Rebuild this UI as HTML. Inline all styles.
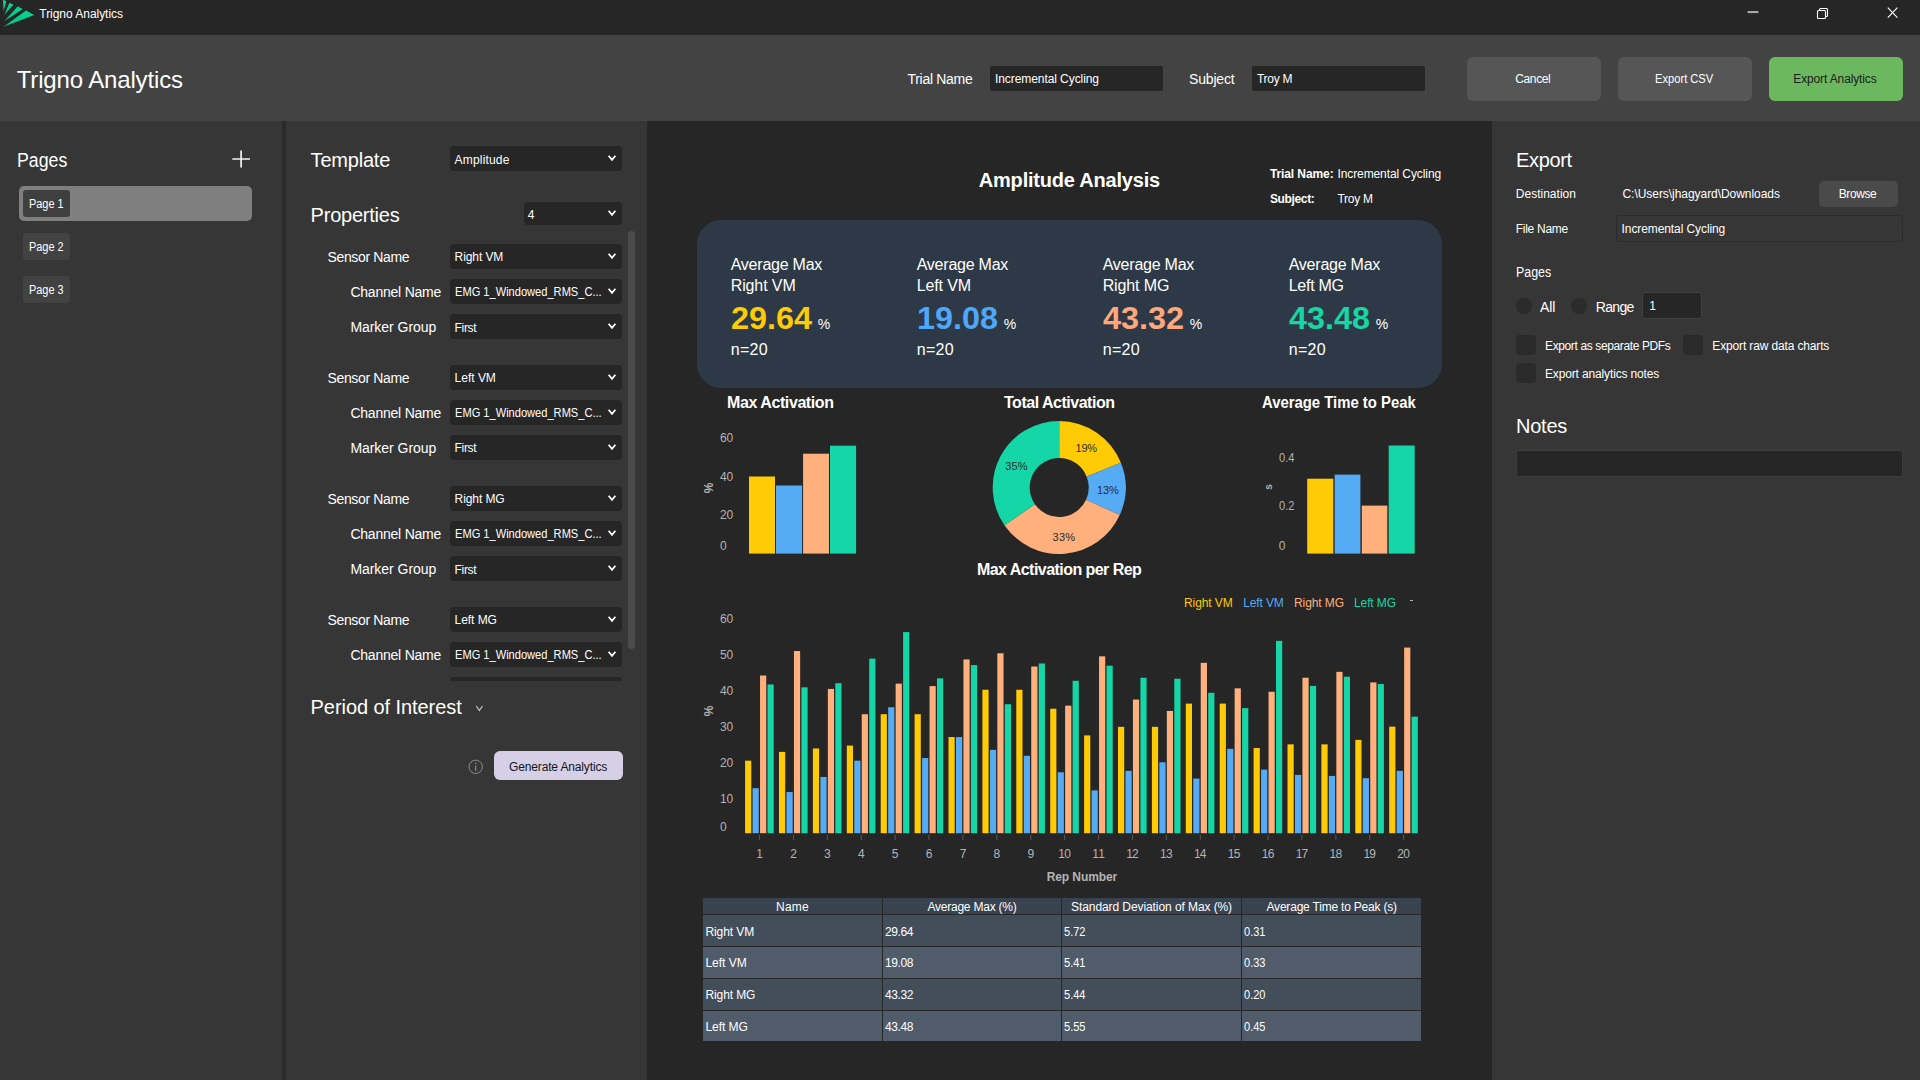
<!DOCTYPE html>
<html lang="en"><head><meta charset="utf-8"><title>Trigno Analytics</title>
<style>
html,body{margin:0;padding:0;background:#363636;}
body{width:1920px;height:1080px;position:relative;overflow:hidden;font-family:"Liberation Sans",sans-serif;}
.b{position:absolute;display:block;}
.t{position:absolute;display:block;white-space:pre;}
</style></head><body>
<div class="b" style="left:0.00px;top:0.00px;width:1920.00px;height:35.00px;background:#262626;"></div>
<div class="b" style="left:0.00px;top:35.00px;width:1920.00px;height:86.00px;background:#434343;"></div>
<div class="b" style="left:0.00px;top:121.00px;width:1920.00px;height:959.00px;background:#363636;"></div>
<div class="b" style="left:282.00px;top:121.00px;width:4.00px;height:959.00px;background:#2b2b2b;"></div>
<div class="b" style="left:647.00px;top:121.00px;width:845.00px;height:959.00px;background:#262626;"></div>
<svg class="b" style="left:0;top:0" width="40" height="35" viewBox="0 0 40 35">
<defs><linearGradient id="lg" x1="0" y1="1" x2="1" y2="0"><stop offset="0" stop-color="#079a6b"/><stop offset="0.3" stop-color="#06c888"/><stop offset="1" stop-color="#05d792"/></linearGradient></defs><g fill="url(#lg)">
<polygon points="3,26.9 26,10.6 34.2,14.9"/>
<polygon points="3.9,21.5 17.6,6.6 22.8,8.9"/>
<polygon points="4.1,15 9.5,2.8 13.5,4.8"/>
<polygon points="3.5,11.2 2.9,-1 6.3,1.6"/>
</g></svg>
<span class="t" style="left:39.30px;top:8px;font-size:12px;line-height:12px;color:#ffffff;letter-spacing:-0.037px;">Trigno Analytics</span>
<svg class="b" style="left:1730px;top:0" width="190" height="35" viewBox="1730 0 190 35">
<rect x="1747.6" y="11" width="10.8" height="2.1" fill="#a8a8a8"/>
<g fill="none" stroke="#ffffff" stroke-width="1.1">
<rect x="1819.5" y="8.5" width="8" height="8" rx="1"/>
<rect x="1817.5" y="10.5" width="8" height="8" rx="1" fill="#262626"/>
<path d="M1887.8 7.6 L1897.4 17.6 M1897.4 7.6 L1887.8 17.6"/>
</g></svg>
<span class="t" style="left:16.70px;top:68px;font-size:24px;line-height:24px;color:#ffffff;letter-spacing:-0.147px;">Trigno Analytics</span>
<span class="t" style="left:907.50px;top:72px;font-size:14px;line-height:14px;color:#ffffff;letter-spacing:-0.300px;">Trial Name</span>
<div class="b" style="left:990.00px;top:66.20px;width:173.00px;height:24.50px;background:#262626;border-radius:2px;"></div>
<span class="t" style="left:995.00px;top:73px;font-size:12px;line-height:12px;color:#ffffff;letter-spacing:-0.076px;">Incremental Cycling</span>
<span class="t" style="left:1189.00px;top:72px;font-size:14px;line-height:14px;color:#ffffff;letter-spacing:-0.175px;">Subject</span>
<div class="b" style="left:1252.00px;top:66.20px;width:173.00px;height:24.50px;background:#262626;border-radius:2px;"></div>
<span class="t" style="left:1257.00px;top:73px;font-size:12px;line-height:12px;color:#ffffff;letter-spacing:-0.275px;">Troy M</span>
<div class="b" style="left:1466.50px;top:56.50px;width:134.00px;height:44.00px;background:#565656;border-radius:6px;"></div>
<span class="t" style="left:1515.30px;top:73px;font-size:12px;line-height:12px;color:#ffffff;letter-spacing:-0.395px;">Cancel</span>
<div class="b" style="left:1617.50px;top:56.50px;width:134.00px;height:44.00px;background:#565656;border-radius:6px;"></div>
<span class="t" style="left:1655.00px;top:73px;font-size:12px;line-height:12px;color:#ffffff;transform:scaleX(0.9291);transform-origin:0 0;">Export CSV</span>
<div class="b" style="left:1768.50px;top:56.50px;width:134.00px;height:44.00px;background:#6cb85f;border-radius:6px;"></div>
<span class="t" style="left:1793.30px;top:73px;font-size:12px;line-height:12px;color:#1c1c1c;letter-spacing:-0.132px;">Export Analytics</span>
<span class="t" style="left:17.20px;top:150px;font-size:20px;line-height:20px;color:#ffffff;transform:scaleX(0.8863);transform-origin:0 0;">Pages</span>
<svg class="b" style="left:230px;top:148px" width="24" height="24" viewBox="230 148 24 24"><path d="M232.3 159H250M241.1 150.5V167.5" stroke="#f2f2f2" stroke-width="1.7" fill="none"/></svg>
<div class="b" style="left:18.80px;top:186.20px;width:233.20px;height:34.60px;background:#7f7f7f;border-radius:5px;"></div>
<div class="b" style="left:23.00px;top:190.00px;width:47.00px;height:27.00px;background:#3f3f3f;border-radius:3px;"></div>
<span class="t" style="left:28.70px;top:198px;font-size:12px;line-height:12px;color:#ffffff;transform:scaleX(0.9105);transform-origin:0 0;">Page 1</span>
<div class="b" style="left:23.00px;top:233.00px;width:47.00px;height:27.00px;background:#424242;border-radius:3px;"></div>
<span class="t" style="left:28.70px;top:241px;font-size:12px;line-height:12px;color:#ffffff;transform:scaleX(0.9105);transform-origin:0 0;">Page 2</span>
<div class="b" style="left:23.00px;top:276.00px;width:47.00px;height:27.00px;background:#424242;border-radius:3px;"></div>
<span class="t" style="left:28.70px;top:284px;font-size:12px;line-height:12px;color:#ffffff;transform:scaleX(0.9105);transform-origin:0 0;">Page 3</span>
<span class="t" style="left:310.60px;top:150px;font-size:20px;line-height:20px;color:#ffffff;letter-spacing:-0.204px;">Template</span>
<div class="b" style="left:450.00px;top:146.30px;width:172.00px;height:24.60px;background:#262626;border-radius:4px;"></div>
<span class="t" style="left:454.60px;top:154px;font-size:12px;line-height:12px;color:#ffffff;letter-spacing:0.178px;">Amplitude</span>
<svg class="b" style="left:606.40px;top:153.30px" width="12" height="10" viewBox="0 0 12 10"><path d="M2.6 2.7L6 6.8L9.4 2.7" stroke="#ffffff" stroke-width="1.7" fill="none"/></svg>
<span class="t" style="left:310.60px;top:205px;font-size:20px;line-height:20px;color:#ffffff;letter-spacing:-0.225px;">Properties</span>
<div class="b" style="left:524.00px;top:202.20px;width:98.00px;height:22.50px;background:#262626;border-radius:4px;"></div>
<span class="t" style="left:527.80px;top:209px;font-size:12px;line-height:12px;color:#ffffff;">4</span>
<svg class="b" style="left:606.40px;top:208.15px" width="12" height="10" viewBox="0 0 12 10"><path d="M2.6 2.7L6 6.8L9.4 2.7" stroke="#ffffff" stroke-width="1.7" fill="none"/></svg>
<div class="b" style="left:286px;top:232px;width:361px;height:449px;overflow:hidden">
<span class="t" style="left:41.50px;top:18px;font-size:14px;line-height:14px;color:#ffffff;letter-spacing:-0.353px;">Sensor Name</span>
<div class="b" style="left:164.00px;top:12.00px;width:172.00px;height:24.75px;background:#262626;border-radius:4px;"></div>
<span class="t" style="left:168.60px;top:19px;font-size:12px;line-height:12px;color:#ffffff;letter-spacing:-0.082px;">Right VM</span>
<svg class="b" style="left:320.40px;top:19.07px" width="12" height="10" viewBox="0 0 12 10"><path d="M2.6 2.7L6 6.8L9.4 2.7" stroke="#ffffff" stroke-width="1.7" fill="none"/></svg>
<span class="t" style="left:64.40px;top:53px;font-size:14px;line-height:14px;color:#ffffff;letter-spacing:-0.225px;">Channel Name</span>
<div class="b" style="left:164.00px;top:47.00px;width:172.00px;height:24.75px;background:#262626;border-radius:4px;"></div>
<span class="t" style="left:168.60px;top:54px;font-size:12px;line-height:12px;color:#ffffff;transform:scaleX(0.9241);transform-origin:0 0;">EMG 1_Windowed_RMS_C...</span>
<svg class="b" style="left:320.40px;top:54.08px" width="12" height="10" viewBox="0 0 12 10"><path d="M2.6 2.7L6 6.8L9.4 2.7" stroke="#ffffff" stroke-width="1.7" fill="none"/></svg>
<span class="t" style="left:64.40px;top:88px;font-size:14px;line-height:14px;color:#ffffff;letter-spacing:-0.043px;">Marker Group</span>
<div class="b" style="left:164.00px;top:82.20px;width:172.00px;height:24.75px;background:#262626;border-radius:4px;"></div>
<span class="t" style="left:168.60px;top:90px;font-size:12px;line-height:12px;color:#ffffff;letter-spacing:-0.344px;">First</span>
<svg class="b" style="left:320.40px;top:89.28px" width="12" height="10" viewBox="0 0 12 10"><path d="M2.6 2.7L6 6.8L9.4 2.7" stroke="#ffffff" stroke-width="1.7" fill="none"/></svg>
<span class="t" style="left:41.50px;top:139px;font-size:14px;line-height:14px;color:#ffffff;letter-spacing:-0.353px;">Sensor Name</span>
<div class="b" style="left:164.00px;top:133.00px;width:172.00px;height:24.75px;background:#262626;border-radius:4px;"></div>
<span class="t" style="left:168.60px;top:140px;font-size:12px;line-height:12px;color:#ffffff;letter-spacing:-0.013px;">Left VM</span>
<svg class="b" style="left:320.40px;top:140.07px" width="12" height="10" viewBox="0 0 12 10"><path d="M2.6 2.7L6 6.8L9.4 2.7" stroke="#ffffff" stroke-width="1.7" fill="none"/></svg>
<span class="t" style="left:64.40px;top:174px;font-size:14px;line-height:14px;color:#ffffff;letter-spacing:-0.225px;">Channel Name</span>
<div class="b" style="left:164.00px;top:168.00px;width:172.00px;height:24.75px;background:#262626;border-radius:4px;"></div>
<span class="t" style="left:168.60px;top:175px;font-size:12px;line-height:12px;color:#ffffff;transform:scaleX(0.9241);transform-origin:0 0;">EMG 1_Windowed_RMS_C...</span>
<svg class="b" style="left:320.40px;top:175.07px" width="12" height="10" viewBox="0 0 12 10"><path d="M2.6 2.7L6 6.8L9.4 2.7" stroke="#ffffff" stroke-width="1.7" fill="none"/></svg>
<span class="t" style="left:64.40px;top:209px;font-size:14px;line-height:14px;color:#ffffff;letter-spacing:-0.043px;">Marker Group</span>
<div class="b" style="left:164.00px;top:203.20px;width:172.00px;height:24.75px;background:#262626;border-radius:4px;"></div>
<span class="t" style="left:168.60px;top:210px;font-size:12px;line-height:12px;color:#ffffff;letter-spacing:-0.344px;">First</span>
<svg class="b" style="left:320.40px;top:210.27px" width="12" height="10" viewBox="0 0 12 10"><path d="M2.6 2.7L6 6.8L9.4 2.7" stroke="#ffffff" stroke-width="1.7" fill="none"/></svg>
<span class="t" style="left:41.50px;top:260px;font-size:14px;line-height:14px;color:#ffffff;letter-spacing:-0.353px;">Sensor Name</span>
<div class="b" style="left:164.00px;top:254.00px;width:172.00px;height:24.75px;background:#262626;border-radius:4px;"></div>
<span class="t" style="left:168.60px;top:261px;font-size:12px;line-height:12px;color:#ffffff;letter-spacing:-0.089px;">Right MG</span>
<svg class="b" style="left:320.40px;top:261.07px" width="12" height="10" viewBox="0 0 12 10"><path d="M2.6 2.7L6 6.8L9.4 2.7" stroke="#ffffff" stroke-width="1.7" fill="none"/></svg>
<span class="t" style="left:64.40px;top:295px;font-size:14px;line-height:14px;color:#ffffff;letter-spacing:-0.225px;">Channel Name</span>
<div class="b" style="left:164.00px;top:289.00px;width:172.00px;height:24.75px;background:#262626;border-radius:4px;"></div>
<span class="t" style="left:168.60px;top:296px;font-size:12px;line-height:12px;color:#ffffff;transform:scaleX(0.9241);transform-origin:0 0;">EMG 1_Windowed_RMS_C...</span>
<svg class="b" style="left:320.40px;top:296.07px" width="12" height="10" viewBox="0 0 12 10"><path d="M2.6 2.7L6 6.8L9.4 2.7" stroke="#ffffff" stroke-width="1.7" fill="none"/></svg>
<span class="t" style="left:64.40px;top:330px;font-size:14px;line-height:14px;color:#ffffff;letter-spacing:-0.043px;">Marker Group</span>
<div class="b" style="left:164.00px;top:324.20px;width:172.00px;height:24.75px;background:#262626;border-radius:4px;"></div>
<span class="t" style="left:168.60px;top:332px;font-size:12px;line-height:12px;color:#ffffff;letter-spacing:-0.344px;">First</span>
<svg class="b" style="left:320.40px;top:331.27px" width="12" height="10" viewBox="0 0 12 10"><path d="M2.6 2.7L6 6.8L9.4 2.7" stroke="#ffffff" stroke-width="1.7" fill="none"/></svg>
<span class="t" style="left:41.50px;top:381px;font-size:14px;line-height:14px;color:#ffffff;letter-spacing:-0.353px;">Sensor Name</span>
<div class="b" style="left:164.00px;top:375.00px;width:172.00px;height:24.75px;background:#262626;border-radius:4px;"></div>
<span class="t" style="left:168.60px;top:382px;font-size:12px;line-height:12px;color:#ffffff;letter-spacing:-0.054px;">Left MG</span>
<svg class="b" style="left:320.40px;top:382.07px" width="12" height="10" viewBox="0 0 12 10"><path d="M2.6 2.7L6 6.8L9.4 2.7" stroke="#ffffff" stroke-width="1.7" fill="none"/></svg>
<span class="t" style="left:64.40px;top:416px;font-size:14px;line-height:14px;color:#ffffff;letter-spacing:-0.225px;">Channel Name</span>
<div class="b" style="left:164.00px;top:410.00px;width:172.00px;height:24.75px;background:#262626;border-radius:4px;"></div>
<span class="t" style="left:168.60px;top:417px;font-size:12px;line-height:12px;color:#ffffff;transform:scaleX(0.9241);transform-origin:0 0;">EMG 1_Windowed_RMS_C...</span>
<svg class="b" style="left:320.40px;top:417.07px" width="12" height="10" viewBox="0 0 12 10"><path d="M2.6 2.7L6 6.8L9.4 2.7" stroke="#ffffff" stroke-width="1.7" fill="none"/></svg>
<span class="t" style="left:64.40px;top:451px;font-size:14px;line-height:14px;color:#ffffff;letter-spacing:-0.043px;">Marker Group</span>
<div class="b" style="left:164.00px;top:445.20px;width:172.00px;height:24.75px;background:#262626;border-radius:4px;"></div>
<span class="t" style="left:168.60px;top:452px;font-size:12px;line-height:12px;color:#ffffff;letter-spacing:-0.344px;">First</span>
<svg class="b" style="left:320.40px;top:452.27px" width="12" height="10" viewBox="0 0 12 10"><path d="M2.6 2.7L6 6.8L9.4 2.7" stroke="#ffffff" stroke-width="1.7" fill="none"/></svg>
</div>
<div class="b" style="left:628.00px;top:231.00px;width:6.60px;height:417.60px;background:#4b4b4b;border-radius:3.3px;"></div>
<span class="t" style="left:310.60px;top:697px;font-size:20px;line-height:20px;color:#ffffff;letter-spacing:-0.068px;">Period of Interest</span>
<svg class="b" style="left:474px;top:703px" width="12" height="10" viewBox="474 703 12 10"><path d="M476.3 706L479.4 710.6L482.5 706" stroke="#cfcfcf" stroke-width="1.1" fill="none"/></svg>
<svg class="b" style="left:466px;top:757px" width="20" height="20" viewBox="466 757 20 20"><circle cx="475.7" cy="766.8" r="6.7" stroke="#8d8d8d" stroke-width="1" fill="none"/><path d="M475.7 765.6V771" stroke="#8d8d8d" stroke-width="1.2"/><circle cx="475.7" cy="763.3" r="0.8" fill="#8d8d8d"/></svg>
<div class="b" style="left:493.70px;top:751.40px;width:129.00px;height:29.00px;background:#d5d0e5;border-radius:6px;"></div>
<span class="t" style="left:509.00px;top:761px;font-size:12px;line-height:12px;color:#15151f;letter-spacing:-0.144px;">Generate Analytics</span>
<span class="t" style="left:1516.00px;top:150px;font-size:20px;line-height:20px;color:#ffffff;letter-spacing:-0.350px;">Export</span>
<span class="t" style="left:1515.80px;top:188px;font-size:12px;line-height:12px;color:#ffffff;letter-spacing:0.010px;">Destination</span>
<span class="t" style="left:1622.50px;top:188px;font-size:12px;line-height:12px;color:#ffffff;letter-spacing:-0.048px;">C:\Users\jhagyard\Downloads</span>
<div class="b" style="left:1818.60px;top:180.50px;width:79.00px;height:26.00px;background:#4a4a4a;border-radius:5px;"></div>
<span class="t" style="left:1838.70px;top:188px;font-size:12px;line-height:12px;color:#ffffff;letter-spacing:-0.400px;">Browse</span>
<span class="t" style="left:1515.80px;top:223px;font-size:12px;line-height:12px;color:#ffffff;letter-spacing:-0.291px;">File Name</span>
<div class="b" style="left:1616.00px;top:215.00px;width:287.00px;height:27.00px;background:#363636;border-radius:3px;box-sizing:border-box;border:1px solid #2c2c2c;"></div>
<span class="t" style="left:1621.60px;top:223px;font-size:12px;line-height:12px;color:#ffffff;letter-spacing:-0.093px;">Incremental Cycling</span>
<span class="t" style="left:1516.00px;top:265px;font-size:14px;line-height:14px;color:#ffffff;transform:scaleX(0.8881);transform-origin:0 0;">Pages</span>
<div class="b" style="left:1516.30px;top:298.20px;width:15.60px;height:15.60px;background:#2b2b2b;border-radius:8px;"></div>
<span class="t" style="left:1540.00px;top:300px;font-size:14px;line-height:14px;color:#ffffff;letter-spacing:-0.100px;">All</span>
<div class="b" style="left:1571.00px;top:298.20px;width:15.60px;height:15.60px;background:#2b2b2b;border-radius:8px;"></div>
<span class="t" style="left:1595.70px;top:300px;font-size:14px;line-height:14px;color:#ffffff;letter-spacing:-0.662px;">Range</span>
<div class="b" style="left:1642.00px;top:292.00px;width:60.00px;height:27.00px;background:#262626;border-radius:3px;box-sizing:border-box;border:1px solid #404040;"></div>
<span class="t" style="left:1649.30px;top:300px;font-size:12px;line-height:12px;color:#ffffff;">1</span>
<div class="b" style="left:1516.00px;top:335.00px;width:20.00px;height:20.00px;background:#2a2a2a;border-radius:4px;"></div>
<span class="t" style="left:1545.00px;top:340px;font-size:12px;line-height:12px;color:#ffffff;letter-spacing:-0.377px;">Export as separate PDFs</span>
<div class="b" style="left:1683.30px;top:335.00px;width:20.00px;height:20.00px;background:#2a2a2a;border-radius:4px;"></div>
<span class="t" style="left:1712.30px;top:340px;font-size:12px;line-height:12px;color:#ffffff;letter-spacing:-0.143px;">Export raw data charts</span>
<div class="b" style="left:1516.00px;top:362.70px;width:20.00px;height:20.00px;background:#2a2a2a;border-radius:4px;"></div>
<span class="t" style="left:1545.00px;top:368px;font-size:12px;line-height:12px;color:#ffffff;letter-spacing:-0.146px;">Export analytics notes</span>
<span class="t" style="left:1516.00px;top:416px;font-size:20px;line-height:20px;color:#ffffff;letter-spacing:-0.238px;">Notes</span>
<div class="b" style="left:1516.00px;top:450.00px;width:386.70px;height:26.70px;background:#262626;border-radius:2px;box-sizing:border-box;border:1px solid #3d3d3d;"></div>
<span class="t" style="left:978.80px;top:170px;font-size:20px;line-height:20px;color:#ffffff;letter-spacing:-0.204px;font-weight:bold;">Amplitude Analysis</span>
<span class="t" style="left:1269.90px;top:168px;font-size:12px;line-height:12px;color:#ffffff;letter-spacing:-0.095px;font-weight:bold;">Trial Name:</span>
<span class="t" style="left:1337.40px;top:168px;font-size:12px;line-height:12px;color:#ffffff;letter-spacing:-0.088px;">Incremental Cycling</span>
<span class="t" style="left:1269.90px;top:193px;font-size:12px;line-height:12px;color:#ffffff;letter-spacing:-0.339px;font-weight:bold;">Subject:</span>
<span class="t" style="left:1337.40px;top:193px;font-size:12px;line-height:12px;color:#ffffff;letter-spacing:-0.235px;">Troy M</span>
<div class="b" style="left:697.20px;top:220.00px;width:744.80px;height:167.60px;background:#2e3947;border-radius:24px;"></div>
<span class="t" style="left:730.70px;top:257px;font-size:16px;line-height:16px;color:#ffffff;letter-spacing:-0.230px;">Average Max</span>
<span class="t" style="left:730.70px;top:278px;font-size:16px;line-height:16px;color:#ffffff;letter-spacing:-0.107px;">Right VM</span>
<span class="t" style="left:730.70px;top:303px;font-size:31px;line-height:31px;color:#ffcb05;transform:scaleX(1.0435);transform-origin:0 0;font-weight:bold;">29.64</span>
<span class="t" style="left:817.70px;top:317px;font-size:14px;line-height:14px;color:#ffffff;">%</span>
<span class="t" style="left:730.70px;top:342px;font-size:16px;line-height:16px;color:#ffffff;letter-spacing:0.333px;">n=20</span>
<span class="t" style="left:916.70px;top:257px;font-size:16px;line-height:16px;color:#ffffff;letter-spacing:-0.230px;">Average Max</span>
<span class="t" style="left:916.70px;top:278px;font-size:16px;line-height:16px;color:#ffffff;letter-spacing:-0.138px;">Left VM</span>
<span class="t" style="left:916.70px;top:303px;font-size:31px;line-height:31px;color:#4ea7f8;transform:scaleX(1.0435);transform-origin:0 0;font-weight:bold;">19.08</span>
<span class="t" style="left:1003.70px;top:317px;font-size:14px;line-height:14px;color:#ffffff;">%</span>
<span class="t" style="left:916.70px;top:342px;font-size:16px;line-height:16px;color:#ffffff;letter-spacing:0.333px;">n=20</span>
<span class="t" style="left:1102.70px;top:257px;font-size:16px;line-height:16px;color:#ffffff;letter-spacing:-0.230px;">Average Max</span>
<span class="t" style="left:1102.70px;top:278px;font-size:16px;line-height:16px;color:#ffffff;letter-spacing:-0.132px;">Right MG</span>
<span class="t" style="left:1102.70px;top:303px;font-size:31px;line-height:31px;color:#ffa87b;transform:scaleX(1.0435);transform-origin:0 0;font-weight:bold;">43.32</span>
<span class="t" style="left:1189.70px;top:317px;font-size:14px;line-height:14px;color:#ffffff;">%</span>
<span class="t" style="left:1102.70px;top:342px;font-size:16px;line-height:16px;color:#ffffff;letter-spacing:0.333px;">n=20</span>
<span class="t" style="left:1288.70px;top:257px;font-size:16px;line-height:16px;color:#ffffff;letter-spacing:-0.230px;">Average Max</span>
<span class="t" style="left:1288.70px;top:278px;font-size:16px;line-height:16px;color:#ffffff;letter-spacing:-0.263px;">Left MG</span>
<span class="t" style="left:1288.70px;top:303px;font-size:31px;line-height:31px;color:#18d5a3;transform:scaleX(1.0435);transform-origin:0 0;font-weight:bold;">43.48</span>
<span class="t" style="left:1375.70px;top:317px;font-size:14px;line-height:14px;color:#ffffff;">%</span>
<span class="t" style="left:1288.70px;top:342px;font-size:16px;line-height:16px;color:#ffffff;letter-spacing:0.333px;">n=20</span>
<span class="t" style="left:727.00px;top:395px;font-size:16px;line-height:16px;color:#ffffff;letter-spacing:-0.413px;font-weight:bold;">Max Activation</span>
<span class="t" style="left:1004.00px;top:395px;font-size:16px;line-height:16px;color:#ffffff;letter-spacing:-0.483px;font-weight:bold;">Total Activation</span>
<span class="t" style="left:1262.00px;top:395px;font-size:16px;line-height:16px;color:#ffffff;transform:scaleX(0.9293);transform-origin:0 0;font-weight:bold;">Average Time to Peak</span>
<span class="t" style="left:977.00px;top:562px;font-size:16px;line-height:16px;color:#ffffff;letter-spacing:-0.551px;font-weight:bold;">Max Activation per Rep</span>
<svg class="b" style="left:647px;top:121px" width="845" height="959" viewBox="647 121 845 959" shape-rendering="auto"><rect x="749.00" y="476.50" width="26.00" height="77.10" fill="#ffcb05"/><rect x="776.00" y="485.50" width="26.10" height="68.10" fill="#56abf5"/><rect x="803.10" y="453.70" width="25.90" height="99.90" fill="#ffb07c"/><rect x="830.00" y="445.70" width="26.10" height="107.90" fill="#14d6a6"/><rect x="1307.20" y="478.70" width="26.10" height="74.90" fill="#ffcb05"/><rect x="1334.70" y="474.60" width="25.70" height="79.00" fill="#56abf5"/><rect x="1361.80" y="505.60" width="25.50" height="48.00" fill="#ffb07c"/><rect x="1388.70" y="445.50" width="26.00" height="108.10" fill="#14d6a6"/><path d="M1059.20 421.00A66.5 66.5 0 0 1 1120.88 462.63L1086.56 476.47A29.5 29.5 0 0 0 1059.20 458.00Z" fill="#ffcb05"/><path d="M1120.88 462.63A66.5 66.5 0 0 1 1119.72 515.06L1086.05 499.72A29.5 29.5 0 0 0 1086.56 476.47Z" fill="#56abf5"/><path d="M1119.72 515.06A66.5 66.5 0 0 1 1004.44 525.22L1034.91 504.23A29.5 29.5 0 0 0 1086.05 499.72Z" fill="#ffb07c"/><path d="M1004.44 525.22A66.5 66.5 0 0 1 1059.20 421.00L1059.20 458.00A29.5 29.5 0 0 0 1034.91 504.23Z" fill="#14d6a6"/><rect x="745.10" y="760.66" width="6.20" height="72.54" fill="#ffcb05"/><rect x="752.57" y="788.17" width="6.20" height="45.03" fill="#56abf5"/><rect x="760.04" y="675.49" width="6.20" height="157.71" fill="#ffb07c"/><rect x="767.51" y="684.46" width="6.20" height="148.74" fill="#14d6a6"/><rect x="759.05" y="835" width="1" height="5" fill="#5a5a5a"/><rect x="779.00" y="751.90" width="6.20" height="81.30" fill="#ffcb05"/><rect x="786.47" y="792.04" width="6.20" height="41.16" fill="#56abf5"/><rect x="793.94" y="651.04" width="6.20" height="182.16" fill="#ffb07c"/><rect x="801.41" y="687.31" width="6.20" height="145.89" fill="#14d6a6"/><rect x="792.95" y="835" width="1" height="5" fill="#5a5a5a"/><rect x="812.90" y="748.44" width="6.20" height="84.76" fill="#ffcb05"/><rect x="820.37" y="776.96" width="6.20" height="56.24" fill="#56abf5"/><rect x="827.84" y="688.94" width="6.20" height="144.26" fill="#ffb07c"/><rect x="835.31" y="683.24" width="6.20" height="149.96" fill="#14d6a6"/><rect x="826.85" y="835" width="1" height="5" fill="#5a5a5a"/><rect x="846.80" y="745.58" width="6.20" height="87.62" fill="#ffcb05"/><rect x="854.27" y="760.66" width="6.20" height="72.54" fill="#56abf5"/><rect x="861.74" y="714.21" width="6.20" height="118.99" fill="#ffb07c"/><rect x="869.21" y="658.58" width="6.20" height="174.62" fill="#14d6a6"/><rect x="860.75" y="835" width="1" height="5" fill="#5a5a5a"/><rect x="880.70" y="714.21" width="6.20" height="118.99" fill="#ffcb05"/><rect x="888.17" y="707.28" width="6.20" height="125.92" fill="#56abf5"/><rect x="895.64" y="683.64" width="6.20" height="149.56" fill="#ffb07c"/><rect x="903.11" y="632.10" width="6.20" height="201.10" fill="#14d6a6"/><rect x="894.65" y="835" width="1" height="5" fill="#5a5a5a"/><rect x="914.60" y="714.21" width="6.20" height="118.99" fill="#ffcb05"/><rect x="922.07" y="758.01" width="6.20" height="75.19" fill="#56abf5"/><rect x="929.54" y="686.09" width="6.20" height="147.11" fill="#ffb07c"/><rect x="937.01" y="678.35" width="6.20" height="154.85" fill="#14d6a6"/><rect x="928.55" y="835" width="1" height="5" fill="#5a5a5a"/><rect x="948.50" y="737.03" width="6.20" height="96.17" fill="#ffcb05"/><rect x="955.97" y="737.03" width="6.20" height="96.17" fill="#56abf5"/><rect x="963.44" y="659.40" width="6.20" height="173.80" fill="#ffb07c"/><rect x="970.91" y="665.10" width="6.20" height="168.10" fill="#14d6a6"/><rect x="962.45" y="835" width="1" height="5" fill="#5a5a5a"/><rect x="982.40" y="689.76" width="6.20" height="143.44" fill="#ffcb05"/><rect x="989.87" y="749.86" width="6.20" height="83.34" fill="#56abf5"/><rect x="997.34" y="653.29" width="6.20" height="179.91" fill="#ffb07c"/><rect x="1004.81" y="704.22" width="6.20" height="128.98" fill="#14d6a6"/><rect x="996.35" y="835" width="1" height="5" fill="#5a5a5a"/><rect x="1016.30" y="689.76" width="6.20" height="143.44" fill="#ffcb05"/><rect x="1023.77" y="755.77" width="6.20" height="77.43" fill="#56abf5"/><rect x="1031.24" y="666.53" width="6.20" height="166.67" fill="#ffb07c"/><rect x="1038.71" y="663.47" width="6.20" height="169.73" fill="#14d6a6"/><rect x="1030.25" y="835" width="1" height="5" fill="#5a5a5a"/><rect x="1050.20" y="708.71" width="6.20" height="124.49" fill="#ffcb05"/><rect x="1057.67" y="772.28" width="6.20" height="60.92" fill="#56abf5"/><rect x="1065.14" y="705.65" width="6.20" height="127.55" fill="#ffb07c"/><rect x="1072.61" y="680.79" width="6.20" height="152.41" fill="#14d6a6"/><rect x="1064.15" y="835" width="1" height="5" fill="#5a5a5a"/><rect x="1084.10" y="735.40" width="6.20" height="97.80" fill="#ffcb05"/><rect x="1091.57" y="790.41" width="6.20" height="42.79" fill="#56abf5"/><rect x="1099.04" y="656.34" width="6.20" height="176.86" fill="#ffb07c"/><rect x="1106.51" y="665.71" width="6.20" height="167.49" fill="#14d6a6"/><rect x="1098.05" y="835" width="1" height="5" fill="#5a5a5a"/><rect x="1118.00" y="726.84" width="6.20" height="106.36" fill="#ffcb05"/><rect x="1125.47" y="770.85" width="6.20" height="62.35" fill="#56abf5"/><rect x="1132.94" y="699.54" width="6.20" height="133.66" fill="#ffb07c"/><rect x="1140.41" y="677.74" width="6.20" height="155.46" fill="#14d6a6"/><rect x="1131.95" y="835" width="1" height="5" fill="#5a5a5a"/><rect x="1151.90" y="726.84" width="6.20" height="106.36" fill="#ffcb05"/><rect x="1159.37" y="762.29" width="6.20" height="70.91" fill="#56abf5"/><rect x="1166.84" y="710.95" width="6.20" height="122.25" fill="#ffb07c"/><rect x="1174.31" y="678.75" width="6.20" height="154.45" fill="#14d6a6"/><rect x="1165.85" y="835" width="1" height="5" fill="#5a5a5a"/><rect x="1185.80" y="703.61" width="6.20" height="129.59" fill="#ffcb05"/><rect x="1193.27" y="778.59" width="6.20" height="54.61" fill="#56abf5"/><rect x="1200.74" y="662.86" width="6.20" height="170.34" fill="#ffb07c"/><rect x="1208.21" y="692.81" width="6.20" height="140.39" fill="#14d6a6"/><rect x="1199.75" y="835" width="1" height="5" fill="#5a5a5a"/><rect x="1219.70" y="703.61" width="6.20" height="129.59" fill="#ffcb05"/><rect x="1227.17" y="748.84" width="6.20" height="84.36" fill="#56abf5"/><rect x="1234.64" y="688.33" width="6.20" height="144.87" fill="#ffb07c"/><rect x="1242.11" y="708.09" width="6.20" height="125.11" fill="#14d6a6"/><rect x="1233.65" y="835" width="1" height="5" fill="#5a5a5a"/><rect x="1253.60" y="748.03" width="6.20" height="85.17" fill="#ffcb05"/><rect x="1261.07" y="769.63" width="6.20" height="63.57" fill="#56abf5"/><rect x="1268.54" y="691.79" width="6.20" height="141.41" fill="#ffb07c"/><rect x="1276.01" y="640.86" width="6.20" height="192.34" fill="#14d6a6"/><rect x="1267.55" y="835" width="1" height="5" fill="#5a5a5a"/><rect x="1287.50" y="744.36" width="6.20" height="88.84" fill="#ffcb05"/><rect x="1294.97" y="774.92" width="6.20" height="58.28" fill="#56abf5"/><rect x="1302.44" y="677.74" width="6.20" height="155.46" fill="#ffb07c"/><rect x="1309.91" y="685.89" width="6.20" height="147.31" fill="#14d6a6"/><rect x="1301.45" y="835" width="1" height="5" fill="#5a5a5a"/><rect x="1321.40" y="744.36" width="6.20" height="88.84" fill="#ffcb05"/><rect x="1328.87" y="775.94" width="6.20" height="57.26" fill="#56abf5"/><rect x="1336.34" y="671.83" width="6.20" height="161.37" fill="#ffb07c"/><rect x="1343.81" y="676.72" width="6.20" height="156.48" fill="#14d6a6"/><rect x="1335.35" y="835" width="1" height="5" fill="#5a5a5a"/><rect x="1355.30" y="739.88" width="6.20" height="93.32" fill="#ffcb05"/><rect x="1362.77" y="778.18" width="6.20" height="55.02" fill="#56abf5"/><rect x="1370.24" y="682.42" width="6.20" height="150.78" fill="#ffb07c"/><rect x="1377.71" y="684.05" width="6.20" height="149.15" fill="#14d6a6"/><rect x="1369.25" y="835" width="1" height="5" fill="#5a5a5a"/><rect x="1389.20" y="726.64" width="6.20" height="106.56" fill="#ffcb05"/><rect x="1396.67" y="770.85" width="6.20" height="62.35" fill="#56abf5"/><rect x="1404.14" y="647.58" width="6.20" height="185.62" fill="#ffb07c"/><rect x="1411.61" y="716.65" width="6.20" height="116.55" fill="#14d6a6"/><rect x="1403.15" y="835" width="1" height="5" fill="#5a5a5a"/></svg>
<span class="t" style="left:720.00px;top:432px;font-size:12px;line-height:12px;color:#b4b4b4;letter-spacing:-0.275px;">60</span>
<span class="t" style="left:720.00px;top:471px;font-size:12px;line-height:12px;color:#b4b4b4;letter-spacing:-0.275px;">40</span>
<span class="t" style="left:720.00px;top:509px;font-size:12px;line-height:12px;color:#b4b4b4;letter-spacing:-0.275px;">20</span>
<span class="t" style="left:720.00px;top:540px;font-size:12px;line-height:12px;color:#b4b4b4;">0</span>
<span class="t" style="left:1278.70px;top:452px;font-size:12px;line-height:12px;color:#b4b4b4;transform:scaleX(0.9203);transform-origin:0 0;">0.4</span>
<span class="t" style="left:1278.70px;top:500px;font-size:12px;line-height:12px;color:#b4b4b4;transform:scaleX(0.9203);transform-origin:0 0;">0.2</span>
<span class="t" style="left:1278.70px;top:540px;font-size:12px;line-height:12px;color:#b4b4b4;">0</span>
<span class="t" style="left:720.00px;top:613px;font-size:12px;line-height:12px;color:#b4b4b4;letter-spacing:-0.275px;">60</span>
<span class="t" style="left:720.00px;top:649px;font-size:12px;line-height:12px;color:#b4b4b4;letter-spacing:-0.275px;">50</span>
<span class="t" style="left:720.00px;top:685px;font-size:12px;line-height:12px;color:#b4b4b4;letter-spacing:-0.275px;">40</span>
<span class="t" style="left:720.00px;top:721px;font-size:12px;line-height:12px;color:#b4b4b4;letter-spacing:-0.275px;">30</span>
<span class="t" style="left:720.00px;top:757px;font-size:12px;line-height:12px;color:#b4b4b4;letter-spacing:-0.275px;">20</span>
<span class="t" style="left:720.00px;top:793px;font-size:12px;line-height:12px;color:#b4b4b4;letter-spacing:-0.275px;">10</span>
<span class="t" style="left:720.00px;top:821px;font-size:12px;line-height:12px;color:#b4b4b4;">0</span>
<span class="t" style="left:694.00px;top:482.00px;width:30px;text-align:center;font-size:12px;line-height:12px;color:#b4b4b4;font-weight:bold;transform:rotate(-90deg);transform-origin:50% 50%;">%</span>
<span class="t" style="left:694.00px;top:705.00px;width:30px;text-align:center;font-size:12px;line-height:12px;color:#b4b4b4;font-weight:bold;transform:rotate(-90deg);transform-origin:50% 50%;">%</span>
<span class="t" style="left:1253.80px;top:482.40px;width:30px;text-align:center;font-size:10px;line-height:10px;color:#b4b4b4;font-weight:bold;transform:rotate(-90deg);transform-origin:50% 50%;">s</span>
<span class="t" style="left:1075.60px;top:443px;font-size:11px;line-height:11px;color:#2b2b2b;letter-spacing:-0.300px;">19%</span>
<span class="t" style="left:1097.00px;top:485px;font-size:11px;line-height:11px;color:#2b2b2b;letter-spacing:-0.100px;">13%</span>
<span class="t" style="left:1052.60px;top:532px;font-size:11px;line-height:11px;color:#2b2b2b;letter-spacing:0.200px;">33%</span>
<span class="t" style="left:1005.20px;top:461px;font-size:11px;line-height:11px;color:#2b2b2b;letter-spacing:0.200px;">35%</span>
<span class="t" style="left:1184.00px;top:597px;font-size:12px;line-height:12px;color:#ffcb05;letter-spacing:-0.096px;">Right VM</span>
<span class="t" style="left:1243.30px;top:597px;font-size:12px;line-height:12px;color:#56abf5;letter-spacing:-0.146px;">Left VM</span>
<span class="t" style="left:1294.00px;top:597px;font-size:12px;line-height:12px;color:#ffb07c;letter-spacing:-0.089px;">Right MG</span>
<span class="t" style="left:1354.00px;top:597px;font-size:12px;line-height:12px;color:#14d6a6;letter-spacing:-0.104px;">Left MG</span>
<div class="b" style="left:1409.50px;top:599.60px;width:3.60px;height:1.00px;background:#b4b4b4;"></div>
<span class="t" style="left:756.24px;top:848px;font-size:12px;line-height:12px;color:#b4b4b4;">1</span>
<span class="t" style="left:790.14px;top:848px;font-size:12px;line-height:12px;color:#b4b4b4;">2</span>
<span class="t" style="left:824.04px;top:848px;font-size:12px;line-height:12px;color:#b4b4b4;">3</span>
<span class="t" style="left:857.94px;top:848px;font-size:12px;line-height:12px;color:#b4b4b4;">4</span>
<span class="t" style="left:891.84px;top:848px;font-size:12px;line-height:12px;color:#b4b4b4;">5</span>
<span class="t" style="left:925.74px;top:848px;font-size:12px;line-height:12px;color:#b4b4b4;">6</span>
<span class="t" style="left:959.64px;top:848px;font-size:12px;line-height:12px;color:#b4b4b4;">7</span>
<span class="t" style="left:993.54px;top:848px;font-size:12px;line-height:12px;color:#b4b4b4;">8</span>
<span class="t" style="left:1027.44px;top:848px;font-size:12px;line-height:12px;color:#b4b4b4;">9</span>
<span class="t" style="left:1058.35px;top:848px;font-size:12px;line-height:12px;color:#b4b4b4;letter-spacing:-0.775px;">10</span>
<span class="t" style="left:1092.25px;top:848px;font-size:12px;line-height:12px;color:#b4b4b4;letter-spacing:0.100px;">11</span>
<span class="t" style="left:1126.15px;top:848px;font-size:12px;line-height:12px;color:#b4b4b4;letter-spacing:-0.775px;">12</span>
<span class="t" style="left:1160.05px;top:848px;font-size:12px;line-height:12px;color:#b4b4b4;letter-spacing:-0.775px;">13</span>
<span class="t" style="left:1193.95px;top:848px;font-size:12px;line-height:12px;color:#b4b4b4;letter-spacing:-0.775px;">14</span>
<span class="t" style="left:1227.85px;top:848px;font-size:12px;line-height:12px;color:#b4b4b4;letter-spacing:-0.775px;">15</span>
<span class="t" style="left:1261.75px;top:848px;font-size:12px;line-height:12px;color:#b4b4b4;letter-spacing:-0.775px;">16</span>
<span class="t" style="left:1295.65px;top:848px;font-size:12px;line-height:12px;color:#b4b4b4;letter-spacing:-0.775px;">17</span>
<span class="t" style="left:1329.55px;top:848px;font-size:12px;line-height:12px;color:#b4b4b4;letter-spacing:-0.775px;">18</span>
<span class="t" style="left:1363.45px;top:848px;font-size:12px;line-height:12px;color:#b4b4b4;letter-spacing:-0.775px;">19</span>
<span class="t" style="left:1397.35px;top:848px;font-size:12px;line-height:12px;color:#b4b4b4;letter-spacing:-0.775px;">20</span>
<span class="t" style="left:1046.70px;top:871px;font-size:12px;line-height:12px;color:#b4b4b4;letter-spacing:-0.086px;font-weight:bold;">Rep Number</span>
<div class="b" style="left:702.70px;top:898.30px;width:179.30px;height:16.00px;background:#38434f;"></div>
<div class="b" style="left:883.20px;top:898.30px;width:177.80px;height:16.00px;background:#38434f;"></div>
<div class="b" style="left:1062.20px;top:898.30px;width:178.80px;height:16.00px;background:#38434f;"></div>
<div class="b" style="left:1242.20px;top:898.30px;width:179.10px;height:16.00px;background:#38434f;"></div>
<div class="b" style="left:702.70px;top:915.30px;width:179.30px;height:30.70px;background:#434e5b;"></div>
<div class="b" style="left:883.20px;top:915.30px;width:177.80px;height:30.70px;background:#434e5b;"></div>
<div class="b" style="left:1062.20px;top:915.30px;width:178.80px;height:30.70px;background:#434e5b;"></div>
<div class="b" style="left:1242.20px;top:915.30px;width:179.10px;height:30.70px;background:#434e5b;"></div>
<div class="b" style="left:702.70px;top:947.30px;width:179.30px;height:30.70px;background:#505c69;"></div>
<div class="b" style="left:883.20px;top:947.30px;width:177.80px;height:30.70px;background:#505c69;"></div>
<div class="b" style="left:1062.20px;top:947.30px;width:178.80px;height:30.70px;background:#505c69;"></div>
<div class="b" style="left:1242.20px;top:947.30px;width:179.10px;height:30.70px;background:#505c69;"></div>
<div class="b" style="left:702.70px;top:979.30px;width:179.30px;height:30.70px;background:#434e5b;"></div>
<div class="b" style="left:883.20px;top:979.30px;width:177.80px;height:30.70px;background:#434e5b;"></div>
<div class="b" style="left:1062.20px;top:979.30px;width:178.80px;height:30.70px;background:#434e5b;"></div>
<div class="b" style="left:1242.20px;top:979.30px;width:179.10px;height:30.70px;background:#434e5b;"></div>
<div class="b" style="left:702.70px;top:1011.30px;width:179.30px;height:29.70px;background:#505c69;"></div>
<div class="b" style="left:883.20px;top:1011.30px;width:177.80px;height:29.70px;background:#505c69;"></div>
<div class="b" style="left:1062.20px;top:1011.30px;width:178.80px;height:29.70px;background:#505c69;"></div>
<div class="b" style="left:1242.20px;top:1011.30px;width:179.10px;height:29.70px;background:#505c69;"></div>
<span class="t" style="left:776.00px;top:901px;font-size:12px;line-height:12px;color:#ffffff;letter-spacing:0.233px;">Name</span>
<span class="t" style="left:927.45px;top:901px;font-size:12px;line-height:12px;color:#ffffff;letter-spacing:-0.229px;">Average Max (%)</span>
<span class="t" style="left:1071.10px;top:901px;font-size:12px;line-height:12px;color:#ffffff;letter-spacing:-0.085px;">Standard Deviation of Max (%)</span>
<span class="t" style="left:1266.50px;top:901px;font-size:12px;line-height:12px;color:#ffffff;letter-spacing:-0.201px;">Average Time to Peak (s)</span>
<span class="t" style="left:705.40px;top:926px;font-size:12px;line-height:12px;color:#ffffff;letter-spacing:-0.082px;">Right VM</span>
<span class="t" style="left:885.10px;top:926px;font-size:12px;line-height:12px;color:#ffffff;letter-spacing:-0.425px;">29.64</span>
<span class="t" style="left:1064.10px;top:926px;font-size:12px;line-height:12px;color:#ffffff;transform:scaleX(0.9198);transform-origin:0 0;">5.72</span>
<span class="t" style="left:1244.10px;top:926px;font-size:12px;line-height:12px;color:#ffffff;transform:scaleX(0.9198);transform-origin:0 0;">0.31</span>
<span class="t" style="left:705.40px;top:957px;font-size:12px;line-height:12px;color:#ffffff;letter-spacing:-0.013px;">Left VM</span>
<span class="t" style="left:885.10px;top:957px;font-size:12px;line-height:12px;color:#ffffff;letter-spacing:-0.425px;">19.08</span>
<span class="t" style="left:1064.10px;top:957px;font-size:12px;line-height:12px;color:#ffffff;transform:scaleX(0.9198);transform-origin:0 0;">5.41</span>
<span class="t" style="left:1244.10px;top:957px;font-size:12px;line-height:12px;color:#ffffff;transform:scaleX(0.9198);transform-origin:0 0;">0.33</span>
<span class="t" style="left:705.40px;top:989px;font-size:12px;line-height:12px;color:#ffffff;letter-spacing:-0.089px;">Right MG</span>
<span class="t" style="left:885.10px;top:989px;font-size:12px;line-height:12px;color:#ffffff;letter-spacing:-0.425px;">43.32</span>
<span class="t" style="left:1064.10px;top:989px;font-size:12px;line-height:12px;color:#ffffff;transform:scaleX(0.9198);transform-origin:0 0;">5.44</span>
<span class="t" style="left:1244.10px;top:989px;font-size:12px;line-height:12px;color:#ffffff;transform:scaleX(0.9198);transform-origin:0 0;">0.20</span>
<span class="t" style="left:705.40px;top:1021px;font-size:12px;line-height:12px;color:#ffffff;letter-spacing:-0.054px;">Left MG</span>
<span class="t" style="left:885.10px;top:1021px;font-size:12px;line-height:12px;color:#ffffff;letter-spacing:-0.425px;">43.48</span>
<span class="t" style="left:1064.10px;top:1021px;font-size:12px;line-height:12px;color:#ffffff;transform:scaleX(0.9198);transform-origin:0 0;">5.55</span>
<span class="t" style="left:1244.10px;top:1021px;font-size:12px;line-height:12px;color:#ffffff;transform:scaleX(0.9198);transform-origin:0 0;">0.45</span>
</body></html>
